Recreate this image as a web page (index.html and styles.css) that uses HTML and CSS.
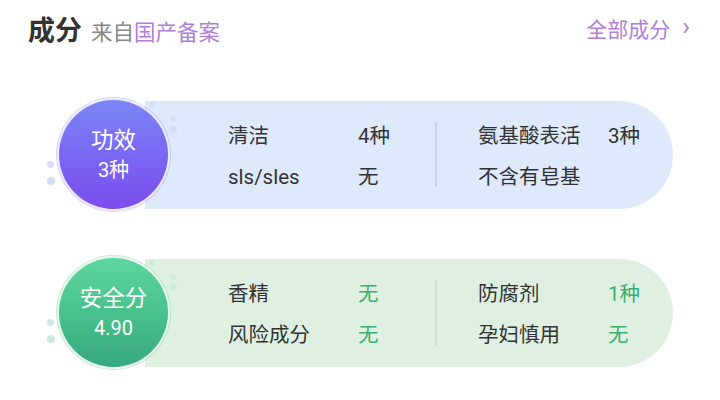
FILE: index.html
```html
<!DOCTYPE html>
<html lang="zh">
<head>
<meta charset="utf-8">
<link rel="stylesheet" href="styles.css">
</head>
<body>
<div class="page">
  <header class="head">
    <div class="title"><span class="main">成分</span><span class="from">来自</span><span class="src">国产备案</span></div>
    <div class="all">全部成分<span class="chev">›</span></div>
  </header>

  <section class="group blue">
    <span class="dot d1"></span><span class="dot d2"></span><span class="dot d3"></span><span class="dot d4"></span><span class="dot d5"></span>
    <div class="badge"><div class="b1">功效</div><div class="b2">3种</div></div>
    <div class="card">
      <div class="col">
        <span class="lbl">清洁</span><span class="val">4种</span>
        <span class="lbl">sls/sles</span><span class="val">无</span>
      </div>
      <div class="sep"></div>
      <div class="col">
        <span class="lbl">氨基酸表活</span><span class="val">3种</span>
        <span class="lbl">不含有皂基</span><span class="val"></span>
      </div>
    </div>
  </section>

  <section class="group green">
    <span class="dot d1"></span><span class="dot d2"></span><span class="dot d3"></span><span class="dot d4"></span><span class="dot d5"></span>
    <div class="badge"><div class="b1">安全分</div><div class="b2">4.90</div></div>
    <div class="card">
      <div class="col">
        <span class="lbl">香精</span><span class="val">无</span>
        <span class="lbl">风险成分</span><span class="val">无</span>
      </div>
      <div class="sep"></div>
      <div class="col">
        <span class="lbl">防腐剂</span><span class="val">1种</span>
        <span class="lbl">孕妇慎用</span><span class="val">无</span>
      </div>
    </div>
  </section>
</div>
</body>
</html>
```
FILE: styles.css
```css
html, body {
  margin: 0;
  padding: 0;
  background: #ffffff;
}
body {
  font-family: Roboto, "Noto Sans CJK SC", sans-serif;
  color: #333333;
  width: 720px;
  height: 400px;
  overflow: hidden;
}
.page {
  padding-top: 9px;
}
.head {
  display: flex;
  justify-content: space-between;
  align-items: center;
  height: 38px;
  padding: 0 30px 0 28px;
}
.title {
  display: flex;
  align-items: baseline;
}
.title .main {
  font-size: 27px;
  font-weight: 700;
  color: #333333;
  margin-right: 9px;
}
.title .from {
  font-size: 21.5px;
  color: #888888;
}
.title .src {
  font-size: 21.5px;
  color: #b07ed8;
}
.all {
  font-size: 21px;
  color: #b07ed8;
  display: flex;
  align-items: center;
}
.all .chev {
  font-size: 26px;
  margin-left: 12px;
  line-height: 1;
  position: relative;
  top: -2px;
}
.group {
  position: relative;
  display: flex;
  align-items: center;
  margin-left: 57px;
  height: 113px;
}
.group.blue {
  margin-top: 51px;
}
.group.green {
  margin-top: 45px;
}
.badge {
  position: relative;
  z-index: 2;
  flex: none;
  width: 109px;
  height: 109px;
  border-radius: 50%;
  border: 2px solid rgba(255, 255, 255, 0.85);
  box-shadow: 0 0 0 1px rgba(170, 160, 240, 0.5);
  display: flex;
  flex-direction: column;
  align-items: center;
  justify-content: center;
  color: #ffffff;
}
.blue .badge {
  background: linear-gradient(180deg, #7b86f6 0%, #7a62f2 60%, #7c4cee 100%);
}
.green .badge {
  background: linear-gradient(180deg, #5dd69c 0%, #45bd8a 60%, #36a67f 100%);
  box-shadow: 0 0 0 1px rgba(150, 220, 170, 0.6);
}
.b1 {
  font-size: 22.5px;
  line-height: 30px;
}
.b2 {
  font-size: 20px;
  line-height: 30px;
}
.card {
  position: relative;
  z-index: 1;
  margin-left: -25px;
  width: 445px;
  height: 108px;
  padding-left: 83px;
  border-radius: 0 54px 54px 0;
  display: flex;
  align-items: center;
}
.blue .card {
  background: #dee9fb;
}
.green .card {
  background: #dff0e3;
}
.col {
  display: grid;
  grid-template-columns: 130px auto;
  row-gap: 13px;
  font-size: 20.5px;
  line-height: 28px;
  padding-top: 4px;
}
.col .val {
  color: #333333;
}
.green .col .val {
  color: #3bb06e;
}
.col:first-child {
  width: 207px;
}
.sep {
  width: 2px;
  height: 65px;
  margin-right: 41px;
}
.blue .sep {
  background: #c3d3ea;
}
.green .sep {
  background: #c4dfcb;
}
.dot {
  position: absolute;
  z-index: 0;
  border-radius: 50%;
}
.blue .dot {
  background: #d3dff5;
}
.green .dot {
  background: #cdebd8;
}
.dot.d1 { left: 92px; top: 4px; width: 6px; height: 6px; }
.dot.d2 { left: 113px; top: 18px; width: 6px; height: 6px; }
.dot.d3 { left: 112px; top: 27px; width: 8px; height: 8px; }
.dot.d4 { left: -10px; top: 63px; width: 7px; height: 7px; }
.dot.d5 { left: -10px; top: 79px; width: 8px; height: 8px; }
.dot.d2, .dot.d3, .dot.d1 { z-index: 3; }
```
